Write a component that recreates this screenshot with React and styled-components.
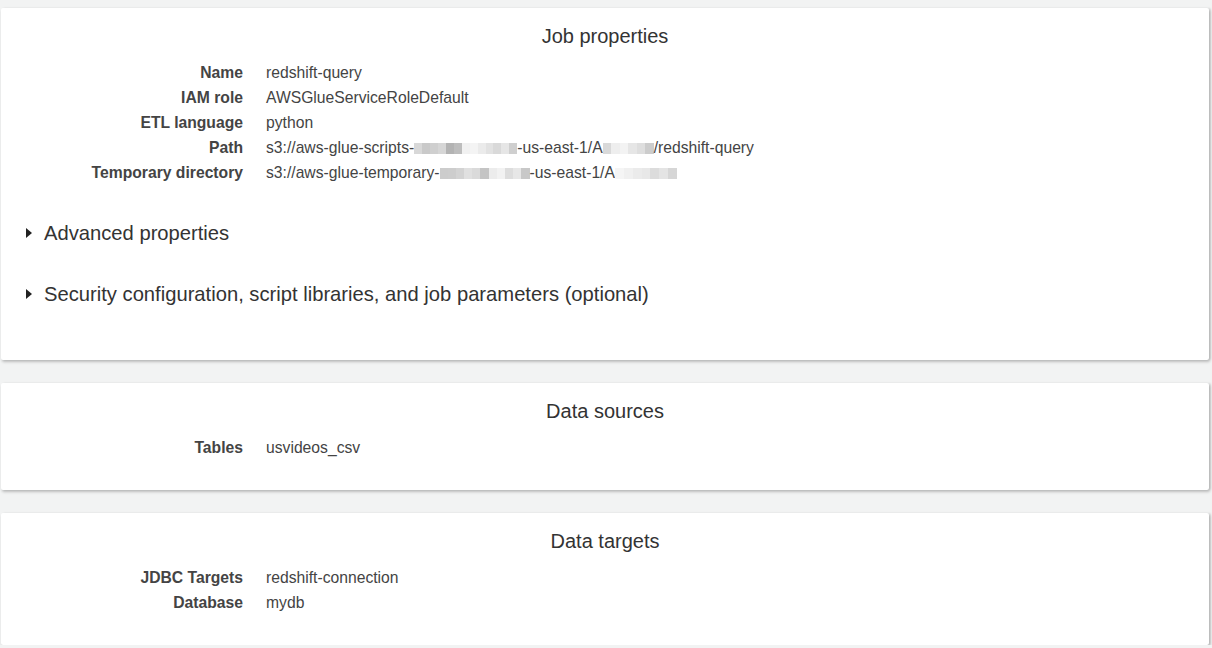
import React from 'react';
import styled, { createGlobalStyle } from 'styled-components';

const GlobalStyle = createGlobalStyle`
    html, body {
        margin: 0;
        padding: 0;
        background: #f2f3f3;
    }
    body {
        font-family: "Liberation Sans", Arial, Helvetica, sans-serif;
        color: #444;
    }
`;

const Page = styled.div`
    display: flex;
    flex-direction: column;
    gap: 23px;
    padding: 8px 3px 0 1px;
`;

const Card = styled.section`
    background: #fff;
    border-radius: 2px;
    box-shadow: 1px 2px 3px 0 rgba(0, 0, 0, 0.22), 2px 0 2px 0 rgba(0, 0, 0, 0.1);
    padding: 16px 0 ${p => p.$bottom || 30}px;
`;

const Title = styled.h2`
    margin: 0 0 12px;
    font-size: 20px;
    font-weight: 400;
    line-height: 24px;
    text-align: center;
    color: #333;
`;

const Props = styled.dl`
    display: grid;
    grid-template-columns: 242px 1fr;
    column-gap: 23px;
    margin: 0;
    font-size: 15.7px;
    line-height: 25px;
`;

const Label = styled.dt`
    font-weight: 700;
    text-align: right;
    color: #444;
    white-space: nowrap;
`;

const Value = styled.dd`
    margin: 0;
    color: #444;
    white-space: nowrap;
    display: flex;
    align-items: center;
`;

const Mosaic = styled.span`
    display: inline-flex;
    height: 11px;
    margin-top: 1px;
`;

const Block = styled.span`
    flex: 1;
    height: 100%;
    background: ${p => p.$c};
`;

const Sections = styled.div`
    display: flex;
    flex-direction: column;
    gap: 37px;
    margin-top: 36px;
    padding-left: 25px;
`;

const Expander = styled.div`
    display: flex;
    align-items: center;
    gap: 12px;
    font-size: 20.2px;
    line-height: 24px;
    color: #333;
    cursor: pointer;
`;

const Caret = styled.span`
    width: 0;
    height: 0;
    border-top: 5px solid transparent;
    border-bottom: 5px solid transparent;
    border-left: 6.5px solid #222;
`;

function Redacted({ width, shades }) {
    return <Mosaic style={{ width }}>
        {shades.map((c, i) => <Block key={i} $c={c} />)}
    </Mosaic>;
}

const scriptsA = ['#d8d8d8', '#c9c9c9', '#cfcfcf', '#d6d6d6', '#b3b3b3', '#bdbdbd', '#f1f1f1', '#f4f4f4', '#ebebeb', '#e2e2e2', '#d9d9d9', '#e6e6e6', '#cfcfcf'];
const scriptsB = ['#d9d9d9', '#eeeeee', '#f3f3f3', '#e6e6e6', '#dedede', '#cccccc'];
const tempA = ['#cccccc', '#cdcdcd', '#d3d3d3', '#e0e0e0', '#dadada', '#c4c4c4', '#ececec', '#f2f2f2', '#dddddd', '#e7e7e7', '#c8c8c8'];
const tempB = ['#f5f5f5', '#f0f0f0', '#ebebeb', '#e8e8e8', '#dcdcdc', '#e4e4e4', '#d6d6d6'];

export default function App() {
    return <>
        <GlobalStyle />
        <Page>
            <Card $bottom={54}>
                <Title>Job properties</Title>
                <Props>
                    <Label>Name</Label>
                    <Value>redshift-query</Value>
                    <Label>IAM role</Label>
                    <Value>AWSGlueServiceRoleDefault</Value>
                    <Label>ETL language</Label>
                    <Value>python</Value>
                    <Label>Path</Label>
                    <Value>
                        s3://aws-glue-scripts-<Redacted width={103} shades={scriptsA} />-us-east-1/A<Redacted width={51} shades={scriptsB} />/redshift-query
                    </Value>
                    <Label>Temporary directory</Label>
                    <Value>
                        s3://aws-glue-temporary-<Redacted width={90} shades={tempA} />-us-east-1/A<Redacted width={62} shades={tempB} />
                    </Value>
                </Props>
                <Sections>
                    <Expander><Caret />Advanced properties</Expander>
                    <Expander><Caret />Security configuration, script libraries, and job parameters (optional)</Expander>
                </Sections>
            </Card>
            <Card>
                <Title>Data sources</Title>
                <Props>
                    <Label>Tables</Label>
                    <Value>usvideos_csv</Value>
                </Props>
            </Card>
            <Card>
                <Title>Data targets</Title>
                <Props>
                    <Label>JDBC Targets</Label>
                    <Value>redshift-connection</Value>
                    <Label>Database</Label>
                    <Value>mydb</Value>
                </Props>
            </Card>
        </Page>
    </>;
}
